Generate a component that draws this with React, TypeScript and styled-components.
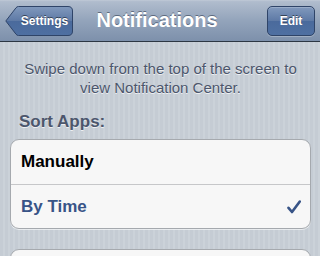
import React from "react";
import styled, { createGlobalStyle } from "styled-components";

const Global = createGlobalStyle`
  html, body { margin: 0; padding: 0; }
  body {
    width: 320px;
    height: 256px;
    overflow: hidden;
    font-family: "Liberation Sans", Arial, Helvetica, sans-serif;
    background: repeating-linear-gradient(90deg, #c5ccd4 0 3px, #cbd2d9 3px 5px);
  }
`;

const Screen = styled.div`
  width: 320px;
  height: 256px;
  display: flex;
  flex-direction: column;
  overflow: hidden;
`;

const NavBar = styled.header`
  height: 41px;
  flex: none;
  border-bottom: 1px solid #2d3743;
  background: linear-gradient(180deg, #c0cad7 0%, #b0bccd 4%, #93a4bb 50%, #7d90ab 100%);
  display: flex;
  align-items: center;
  justify-content: space-between;
  padding: 0 5px;
  position: relative;
`;

const Title = styled.h1`
  position: absolute;
  left: 0;
  right: 0;
  top: 0;
  margin: 0;
  text-align: center;
  line-height: 40px;
  padding-right: 6px;
  font-size: 20px;
  font-weight: bold;
  color: #fff;
  text-shadow: 0 -1px 0 rgba(40, 50, 70, 0.55);
  pointer-events: none;
`;

const BackButton = styled.button`
  position: relative;
  width: 68px;
  height: 30px;
  margin-top: 1px;
  padding: 0 0 0 11px;
  border: 0;
  background: none;
  font-family: inherit;
  font-size: 12px;
  font-weight: bold;
  color: #fff;
  text-shadow: 0 -1px 0 rgba(0, 0, 0, 0.5);
  z-index: 1;
`;

const BackShape = styled.svg`
  position: absolute;
  left: 0;
  top: 0;
  z-index: -1;
`;

const EditButton = styled.button`
  width: 48px;
  height: 30px;
  margin-top: 1px;
  border: 1px solid #2f4468;
  border-radius: 5px;
  background: linear-gradient(180deg, #8199bd 0%, #5d79a5 50%, #4a6a9c 51%, #4f70a2 100%);
  box-shadow: 0 1px 0 rgba(255, 255, 255, 0.25), inset 0 1px 0 rgba(255, 255, 255, 0.2);
  font-family: inherit;
  font-size: 12px;
  font-weight: bold;
  color: #fff;
  text-shadow: 0 -1px 0 rgba(0, 0, 0, 0.5);
  z-index: 1;
`;

const Content = styled.main`
  display: flex;
  flex-direction: column;
  padding: 17px 9px 0 10px;
`;

const Hint = styled.p`
  margin: 0;
  font-size: 15px;
  line-height: 19px;
  text-align: center;
  color: #4c566c;
  text-shadow: 0 1px 0 rgba(255, 255, 255, 0.7);
`;

const SectionTitle = styled.h2`
  margin: 14px 0 7px 9px;
  font-size: 17px;
  line-height: 21px;
  font-weight: bold;
  color: #4c566c;
  text-shadow: 0 1px 0 rgba(255, 255, 255, 0.7);
`;

const Group = styled.ul`
  margin: 0 0 20px;
  padding: 0;
  list-style: none;
  background: #f7f7f7;
  border: 1px solid #a5a9ae;
  border-radius: 9px;
  box-shadow: 0 1px 0 rgba(255, 255, 255, 0.6);
  overflow: hidden;
  flex: none;
`;

const Row = styled.li<{ $selected?: boolean }>`
  box-sizing: border-box;
  height: 44px;
  display: flex;
  align-items: center;
  justify-content: space-between;
  padding: 0 9px 0 10px;
  font-size: 17px;
  font-weight: bold;
  color: ${(p) => (p.$selected ? "#385487" : "#000")};
  & + & {
    border-top: 1px solid #c6c7c9;
  }
`;

const Check = () => (
  <svg width="14" height="14" viewBox="0 0 14 14">
    <path d="M1.5 7.8 L5 12 L12.8 1.5" fill="none" stroke="#385487" strokeWidth="2.6" strokeLinecap="round" strokeLinejoin="round" />
  </svg>
);

export default function App() {
  return (
    <Screen>
      <Global />
      <NavBar>
        <BackButton>
          <BackShape width="68" height="30" viewBox="0 0 68 30">
            <defs>
              <linearGradient id="bg" x1="0" y1="0" x2="0" y2="1">
                <stop offset="0" stopColor="#8199bd" />
                <stop offset="0.5" stopColor="#5d79a5" />
                <stop offset="0.51" stopColor="#4a6a9c" />
                <stop offset="1" stopColor="#4f70a2" />
              </linearGradient>
            </defs>
            <path
              d="M0.8 15 L11 1.8 Q11.9 0.5 13.5 0.5 L63 0.5 Q67.5 0.5 67.5 5 L67.5 25 Q67.5 29.5 63 29.5 L13.5 29.5 Q11.9 29.5 11 28.2 Z"
              fill="url(#bg)"
              stroke="#2f4468"
              strokeWidth="1"
            />
          </BackShape>
          Settings
        </BackButton>
        <Title>Notifications</Title>
        <EditButton>Edit</EditButton>
      </NavBar>
      <Content>
        <Hint>
          Swipe down from the top of the screen to
          <br />
          view Notification Center.
        </Hint>
        <SectionTitle>Sort Apps:</SectionTitle>
        <Group>
          <Row>Manually</Row>
          <Row $selected>
            By Time
            <Check />
          </Row>
        </Group>
        <Group>
          <Row />
        </Group>
      </Content>
    </Screen>
  );
}
